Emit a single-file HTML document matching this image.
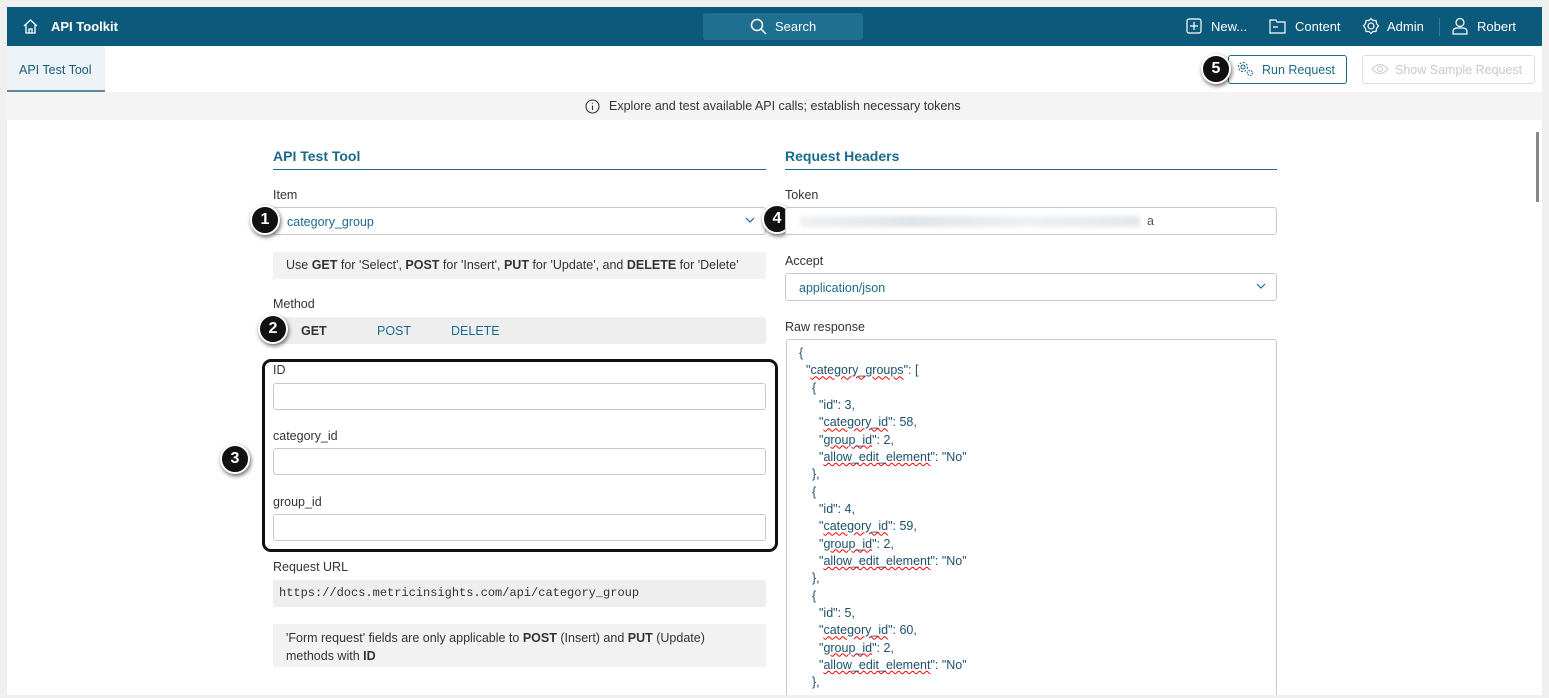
<!DOCTYPE html>
<html><head><style>
*{box-sizing:border-box;margin:0;padding:0}
html,body{width:1549px;height:698px;overflow:hidden}
body{background:#fff;font-family:"Liberation Sans",sans-serif;font-size:12.5px;color:#333;position:relative}
.frame{position:absolute;left:0;top:0;width:1549px;height:698px;border:1px solid #ddd;border-width:7px 7px 3px 7px;border-color:#f0f0f0;z-index:5;pointer-events:none}
.hdr{position:absolute;left:7px;top:7px;width:1535px;height:39px;background:#0b5a7c;color:#fff}
.abs{position:absolute}
.blue{color:#1b6a8c}
.lbl{position:absolute;font-size:12.5px;color:#333}
.inp{position:absolute;border:1px solid #c8c8c8;border-radius:3px;background:#fff}
.badge{position:absolute;width:30px;height:30px;border-radius:50%;background:#111;color:#fff;border:2px solid #fff;box-shadow:1px 2px 4px rgba(0,0,0,.6);font-size:16px;font-weight:bold;text-align:center;line-height:26px}
.json div{height:17.33px;line-height:17.33px;font-size:12.5px;color:#1b4f6c}
.u{text-decoration:underline wavy red;text-decoration-thickness:1px}
.sec{position:absolute;font-size:14px;font-weight:bold;color:#1b6a8c;border-bottom:1px solid #1b6a8c;padding-bottom:5px}
</style></head><body>
<div class="frame"></div>
<div class="hdr">
 <svg class="abs" style="left:15px;top:11px" width="17" height="17" viewBox="0 0 17 17" fill="none" stroke="#fff" stroke-width="1.3"><path d="M2 8 L8.5 2 L15 8 M4 7 V15 H13 V7 M7 15 V11 H10 V15"/></svg>
 <div class="abs" style="left:44px;top:12px;font-weight:bold;font-size:13px">API Toolkit</div>
 <div class="abs" style="left:696px;top:6px;width:160px;height:27px;background:#1f7090;border-radius:3px"></div>
 <svg class="abs" style="left:743px;top:11px" width="17" height="17" viewBox="0 0 17 17" fill="none" stroke="#fff" stroke-width="1.5"><circle cx="7" cy="7" r="5.5"/><path d="M11 11 L16 16"/></svg>
 <div class="abs" style="left:768px;top:12px;font-size:13px">Search</div>
 <svg class="abs" style="left:1179px;top:11px" width="16" height="16" viewBox="0 0 16 16" fill="none" stroke="#fff" stroke-width="1.2"><rect x="1" y="1" width="14" height="14" rx="2"/><path d="M8 4V12M4 8H12"/></svg>
 <div class="abs" style="left:1204px;top:12px;font-size:13px">New...</div>
 <svg class="abs" style="left:1262px;top:11px" width="17" height="16" viewBox="0 0 17 16" fill="none" stroke="#fff" stroke-width="1.2"><path d="M1 2H7L8 4H16V15H1Z M4 9H9"/></svg>
 <div class="abs" style="left:1288px;top:12px;font-size:13px">Content</div>
 <svg class="abs" style="left:1355px;top:10px" width="18" height="18" viewBox="0 0 18 18" fill="none" stroke="#fff" stroke-width="1.2"><circle cx="9" cy="9" r="3"/><path d="M9 1.5L11 3.5L14 3.5L14.5 6.5L16.5 9L14.5 11.5L14 14.5L11 14.5L9 16.5L7 14.5L4 14.5L3.5 11.5L1.5 9L3.5 6.5L4 3.5L7 3.5Z"/></svg>
 <div class="abs" style="left:1380px;top:12px;font-size:13px">Admin</div>
 <div class="abs" style="left:1432px;top:11px;width:1px;height:18px;background:#3b7a95"></div>
 <svg class="abs" style="left:1445px;top:10px" width="16" height="18" viewBox="0 0 16 18" fill="none" stroke="#fff" stroke-width="1.2"><circle cx="8" cy="5.5" r="4"/><path d="M1 17V15Q1 11 5 11H11Q15 11 15 15V17Z"/></svg>
 <div class="abs" style="left:1470px;top:12px;font-size:13px">Robert</div>
</div>
<div class="abs" style="left:7px;top:46px;width:98px;height:46px;background:#eef3f7;border-bottom:2px solid #5a8aa3"></div>
<div class="abs" style="left:19px;top:63px;font-size:12.5px;color:#1b5a7a">API Test Tool</div>
<div class="abs" style="left:1228px;top:55px;width:119px;height:29px;border:1px solid #1b6a8c;border-radius:3px"></div>
<svg class="abs" style="left:1237px;top:61px" width="18" height="16" viewBox="0 0 18 16" fill="none" stroke="#1b6a8c" stroke-width="1.1"><circle cx="6" cy="6" r="2"/><circle cx="6" cy="6" r="4.5" stroke-dasharray="2 1.5"/><circle cx="13" cy="12" r="2.5" stroke-dasharray="1.5 1"/></svg>
<div class="abs blue" style="left:1262px;top:63px;font-size:12.5px">Run Request</div>
<div class="abs" style="left:1362px;top:55px;width:173px;height:29px;border:1px solid #ddd;border-radius:3px"></div>
<svg class="abs" style="left:1371px;top:63px" width="18" height="12" viewBox="0 0 18 12" fill="none" stroke="#ccc" stroke-width="1.1"><path d="M1 6Q9 -3 17 6Q9 15 1 6Z"/><circle cx="9" cy="6" r="2.5"/></svg>
<div class="abs" style="left:1395px;top:63px;font-size:12.5px;color:#c8c8c8">Show Sample Request</div>
<div class="badge" style="left:1201px;top:54px">5</div>
<div class="abs" style="left:7px;top:92px;width:1535px;height:28px;background:#f4f4f4"></div>
<svg class="abs" style="left:585px;top:99px" width="15" height="15" viewBox="0 0 15 15" fill="none" stroke="#333" stroke-width="1.1"><circle cx="7.5" cy="7.5" r="6.5"/><path d="M7.5 6.5V11M7.5 4V4.8"/></svg>
<div class="abs" style="left:609px;top:99px;font-size:12.5px;color:#333">Explore and test available API calls; establish necessary tokens</div>
<div class="abs" style="left:1536px;top:132px;width:3px;height:70px;background:#888"></div>

<div class="sec" style="left:273px;top:148px;width:493px">API Test Tool</div>
<div class="sec" style="left:785px;top:148px;width:492px">Request Headers</div>

<div class="lbl" style="left:273px;top:188px">Item</div>
<div class="inp" style="left:273px;top:207px;width:493px;height:28px"></div>
<div class="abs blue" style="left:287px;top:215px">category_group</div>
<svg class="abs" style="left:745px;top:217px" width="10" height="7" viewBox="0 0 10 7" fill="none" stroke="#1b6a8c" stroke-width="1.2"><path d="M1 1L5 5L9 1"/></svg>
<div class="abs" style="left:273px;top:252px;width:493px;height:27px;background:#f2f2f2"></div>
<div class="abs" style="left:286px;top:258px;font-size:12.5px">Use <b>GET</b> for 'Select', <b>POST</b> for 'Insert', <b>PUT</b> for 'Update', and <b>DELETE</b> for 'Delete'</div>
<div class="lbl" style="left:273px;top:297px">Method</div>
<div class="abs" style="left:273px;top:317px;width:493px;height:27px;background:#eee;border-radius:3px"></div>
<div class="abs" style="left:301px;top:324px;font-weight:bold">GET</div>
<div class="abs blue" style="left:377px;top:324px">POST</div>
<div class="abs blue" style="left:451px;top:324px">DELETE</div>

<div class="abs" style="left:262px;top:359px;width:516px;height:193px;border:3px solid #111;border-radius:9px"></div>
<div class="lbl" style="left:273px;top:363px">ID</div>
<div class="inp" style="left:273px;top:383px;width:493px;height:27px"></div>
<div class="lbl" style="left:273px;top:429px">category_id</div>
<div class="inp" style="left:273px;top:448px;width:493px;height:27px"></div>
<div class="lbl" style="left:273px;top:495px">group_id</div>
<div class="inp" style="left:273px;top:514px;width:493px;height:27px"></div>
<div class="lbl" style="left:273px;top:560px">Request URL</div>
<div class="abs" style="left:273px;top:580px;width:493px;height:27px;background:#eee;border-radius:2px"></div>
<div class="abs" style="left:279px;top:586px;font-family:'Liberation Mono',monospace;font-size:12px;color:#333">https://docs.metricinsights.com/api/category_group</div>
<div class="abs" style="left:273px;top:624px;width:493px;height:43px;background:#f2f2f2"></div>
<div class="abs" style="left:286px;top:629px;font-size:12.5px;line-height:18px;width:445px">'Form request' fields are only applicable to <b>POST</b> (Insert) and <b>PUT</b> (Update) methods with <b>ID</b></div>

<div class="badge" style="left:250px;top:205px">1</div>
<div class="badge" style="left:258px;top:314px">2</div>
<div class="badge" style="left:220px;top:444px">3</div>
<div class="badge" style="left:762px;top:204px">4</div>

<div class="lbl" style="left:785px;top:188px">Token</div>
<div class="inp" style="left:785px;top:207px;width:492px;height:28px"></div>
<div class="abs" style="left:800px;top:216px;width:340px;height:11px;background:linear-gradient(90deg,#eef1f3,#dfe4e8,#eef1f3,#e3e7ea);filter:blur(2px)"></div>
<div class="abs" style="left:1147px;top:214px;color:#555">a</div>
<div class="lbl" style="left:785px;top:254px">Accept</div>
<div class="inp" style="left:785px;top:273px;width:492px;height:28px"></div>
<div class="abs blue" style="left:799px;top:281px">application/json</div>
<svg class="abs" style="left:1256px;top:283px" width="10" height="7" viewBox="0 0 10 7" fill="none" stroke="#1b6a8c" stroke-width="1.2"><path d="M1 1L5 5L9 1"/></svg>
<div class="lbl" style="left:785px;top:320px">Raw response</div>
<div class="inp" style="left:786px;top:339px;width:491px;height:360px"></div>
<div class="abs json" style="left:799px;top:345px">
<div>{</div>
<div style="padding-left:7px">"<span class="u">category_groups</span>": [</div>
<div style="padding-left:13px">{</div>
<div style="padding-left:20px">"id": 3,</div>
<div style="padding-left:20px">"<span class="u">category_id</span>": 58,</div>
<div style="padding-left:20px">"<span class="u">group_id</span>": 2,</div>
<div style="padding-left:20px">"<span class="u">allow_edit_element</span>": "No"</div>
<div style="padding-left:13px">},</div>
<div style="padding-left:13px">{</div>
<div style="padding-left:20px">"id": 4,</div>
<div style="padding-left:20px">"<span class="u">category_id</span>": 59,</div>
<div style="padding-left:20px">"<span class="u">group_id</span>": 2,</div>
<div style="padding-left:20px">"<span class="u">allow_edit_element</span>": "No"</div>
<div style="padding-left:13px">},</div>
<div style="padding-left:13px">{</div>
<div style="padding-left:20px">"id": 5,</div>
<div style="padding-left:20px">"<span class="u">category_id</span>": 60,</div>
<div style="padding-left:20px">"<span class="u">group_id</span>": 2,</div>
<div style="padding-left:20px">"<span class="u">allow_edit_element</span>": "No"</div>
<div style="padding-left:13px">},</div>
</div>
</body></html>
